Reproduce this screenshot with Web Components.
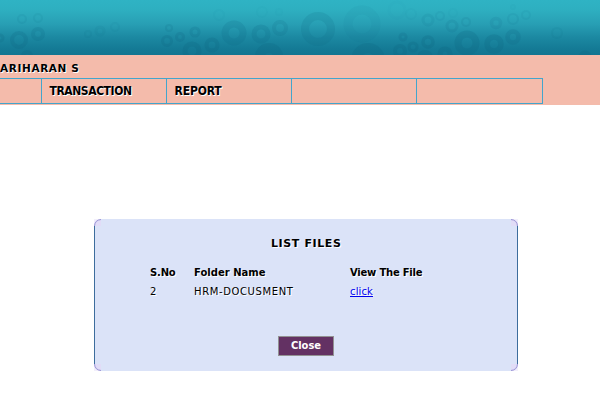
<!DOCTYPE html>
<html lang="en"><head><meta charset="utf-8"><title>List Files</title>
<style>
html,body{margin:0;background:#fff}
body{width:600px;height:400px;overflow:hidden;font-family:"DejaVu Sans",Verdana,sans-serif;font-size:10px;color:#000}
</style></head><body>
<files-page></files-page>
<script>
class FitText extends HTMLElement{
  connectedCallback(){
    const root=this.attachShadow({mode:'open'});
    root.innerHTML='<style>:host{display:block;white-space:nowrap;line-height:14px;text-shadow:var(--halo,1px 1px 0 #fff)}span{display:inline-block}</style><span><slot></slot></span>';
    const s=root.querySelector('span'),n=this.textContent.length;
    const gap=(Number(this.getAttribute('width'))-s.getBoundingClientRect().width)/n;
    s.style.letterSpacing=gap.toFixed(3)+'px';
  }
}
class BubbleBanner extends HTMLElement{
  connectedCallback(){
    const rings=[[19,40,7,4],[38,34,5,4],[0,38,3,3],[22,19,4,2],[38,18,4,2],[27,56,4,4],[100,31,4,3],[88,34,3,2],[115,27,4,2],[167,41,4.5,3],[180,37,3.5,3],[169,28,3,2],[195,32,4,3],[192,51,7,5],[212,45,5.5,4],[219,15,5,2],[234,33,9,7],[261,34,7,5],[280,28,6,4],[262,12,5,2],[279,12,3,2],[269,57,9,10],[318,29,13,8],[362,24,14,9],[368,60,12,10],[397,10,8,3],[403,37,3,3],[400,51,5,4],[413,47,4,3],[428,20,5,3],[440,16,4,2],[428,42,5,3.5],[425,58,5,6],[445,54,5,5],[452,26,5,3],[466,22,4,2],[467,43,9,7],[494,44,7,5.5],[496,23,4.5,3.5],[513,37,5.5,4.5],[513,19,5,2],[526,15,4,2],[513,7,2,2],[585,57,4,5],[557,33,5,2],[411,14,5,2],[453,13,4,2]];
    const faint=new Set([88,100,115,362,219,262,279,397,411,453,557]);
    this.attachShadow({mode:'open'}).innerHTML=`<style>:host{display:block;height:55px;background:linear-gradient(#2fb3c4 0,#2eafc0 10px,#289fb4 24px,#1c89a2 37px,#147a95 49px,#137591)}svg{display:block}g{fill:none;stroke:#0e6480;filter:blur(.6px)}</style><svg width="600" height="55"><g>${rings.map(([x,y,r,w])=>`<circle cx="${x}" cy="${y}" r="${r}" stroke-width="${w}" opacity="${((0.03+Math.min(.19,Math.max(0,y-8)/50*.28))*(faint.has(x)?.5:1)).toFixed(3)}"/>`).join('')}</g></svg>`;
  }
}
class MenuBar extends HTMLElement{
  connectedCallback(){
    this.attachShadow({mode:'open'}).innerHTML=`<style>:host{display:block;height:50px;background:#f4bbab;box-sizing:border-box}
    .user{height:23px;box-sizing:border-box;padding:6px 0 0;font-size:10.5px;font-weight:bold}
    nav{display:grid;grid-template-columns:42px 125px 125px 125px 126px;width:543px;height:26px;box-sizing:border-box;border-top:1px solid #43a5cc;border-bottom:1px solid #43a5cc}
    nav>div{border-right:1px solid #43a5cc;padding:5px 0 0 7.5px;font:bold 12px "DejaVu Sans Condensed","DejaVu Sans",sans-serif;font-stretch:condensed}</style>
    <div class="user"><fit-text width="79.5">ARIHARAN S</fit-text></div>
    <nav><div></div><div><fit-text width="82">TRANSACTION</fit-text></div><div><fit-text width="47">REPORT</fit-text></div><div></div><div></div></nav>`;
  }
}
class FileTable extends HTMLElement{
  connectedCallback(){
    this.attachShadow({mode:'open'}).innerHTML=`<style>:host{display:grid;grid-template-columns:44px 156px 100px;grid-template-rows:19px 19px}
    .h{font-weight:bold}a{color:#00e;text-decoration:none}.link{width:23px;height:12px;box-sizing:border-box;border-bottom:1px solid #00e}</style>
    <fit-text class="h" width="25.5">S.No</fit-text><fit-text class="h" width="71.5">Folder Name</fit-text><fit-text class="h" width="72.3">View The File</fit-text>
    <fit-text width="7">2</fit-text><fit-text width="99.5">HRM-DOCUSMENT</fit-text><a><fit-text class="link" width="23">click</fit-text></a>`;
  }
}
class ActionButton extends HTMLElement{
  connectedCallback(){
    this.attachShadow({mode:'open'}).innerHTML=`<style>:host{display:block;width:56px;height:20px;box-sizing:border-box;border:1px solid #929292;background:#633163;color:#fff;font:bold 11px "DejaVu Sans Condensed","DejaVu Sans",sans-serif;font-stretch:condensed;padding:2px 0 0 12px;--halo:none}</style><slot></slot>`;
  }
}
class FilesPanel extends HTMLElement{
  connectedCallback(){
    this.attachShadow({mode:'open'}).innerHTML=`<style>:host{display:block;position:relative;width:424px;height:152px;box-sizing:border-box;background:#dbe3f8;padding:18px 0 0}
    .edge{position:absolute;inset:0;display:block}
    h1{margin:0 0 0 177px;font-size:11px;height:29px}file-table{margin-left:56px}action-button{margin:32px 0 0 184px}</style>
    <svg class="edge" width="424" height="152"><g fill="#e1dcf7"><path d="M0 0h7v7H0zM417 0h7v7h-7zM0 145h7v7H0zM417 145h7v7h-7z"/></g>
    <path d="M0 7Q0 0 7 0H0zM417 0Q424 0 424 7V0zM0 145Q0 152 7 152H0zM417 152Q424 152 424 145V152z" fill="#f2effc"/>
    <g fill="none" stroke="#9b95d5"><path d="M.5 7Q1 1 7 .5M417 .5Q423 1 423.5 7M.5 145Q1 151 7 151.5M417 151.5Q423 151 423.5 145"/></g>
    <path d="M.5 7V145M423.5 7V145" stroke="#3d6d9d"/></svg>
    <h1><fit-text width="70.5">LIST FILES</fit-text></h1><file-table></file-table><action-button><fit-text width="30">Close</fit-text></action-button>`;
  }
}
class FilesPage extends HTMLElement{
  connectedCallback(){
    this.attachShadow({mode:'open'}).innerHTML='<style>:host{display:block}files-panel{margin:114px 0 0 94px}</style><bubble-banner></bubble-banner><menu-bar></menu-bar><files-panel></files-panel>';
  }
}
customElements.define('fit-text',FitText);
customElements.define('bubble-banner',BubbleBanner);
customElements.define('menu-bar',MenuBar);
customElements.define('file-table',FileTable);
customElements.define('action-button',ActionButton);
customElements.define('files-panel',FilesPanel);
customElements.define('files-page',FilesPage);
</script></body></html>
